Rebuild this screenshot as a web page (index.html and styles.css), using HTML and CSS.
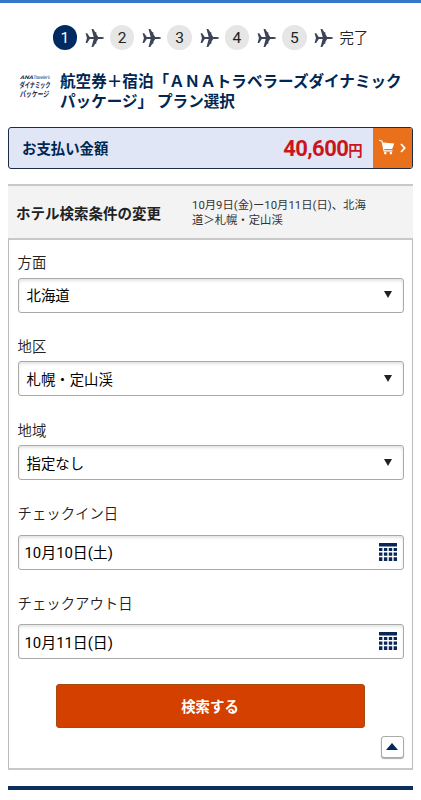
FILE: index.html
```html
<!DOCTYPE html>
<html lang="ja">
<head>
  <meta charset="UTF-8" />
  <meta name="viewport" content="width=device-width, initial-scale=1.0"/>
  <title>プラン選択</title>
  <link rel="stylesheet" href="styles.css">
</head>
<body>
  <svg width="0" height="0" class="defs">
    <symbol id="plane" viewBox="0 0 20 20">
      <path d="M0.6 5h1.6l2.7 3.9h4L6.7 0.8h1.8l5 8.1h3.4q2.5 0.2 2.7 1.1q-0.2 0.9-2.7 1.1h-3.4l-5 8.1H6.7l2.2-8.1h-4L2.2 15H0.6l1.4-5z"/>
      <path d="M9.2 4h2.4v1.8H9.2zM9.2 14.2h2.4V16H9.2z"/>
    </symbol>
    <symbol id="calendar" viewBox="0 0 18 18">
      <path d="M0 0h18v3.4H0zM0 5h3.4v3H0zM4.9 5h3.4v3H4.9zM9.8 5h3.4v3H9.8zM14.6 5H18v3h-3.4zM0 9.5h3.4v3.2H0zM4.9 9.5h3.4v3.2H4.9zM9.8 9.5h3.4v3.2H9.8zM14.6 9.5H18v3.2h-3.4zM0 14.3h3.4V18H0zM4.9 14.3h3.4V18H4.9zM9.8 14.3h3.4V18H9.8zM14.6 14.3H18V18h-3.4z"/>
    </symbol>
  </svg>

  <div class="steps">
    <span class="step current">1</span>
    <svg class="plane"><use href="#plane"/></svg>
    <span class="step">2</span>
    <svg class="plane"><use href="#plane"/></svg>
    <span class="step">3</span>
    <svg class="plane"><use href="#plane"/></svg>
    <span class="step">4</span>
    <svg class="plane"><use href="#plane"/></svg>
    <span class="step">5</span>
    <svg class="plane"><use href="#plane"/></svg>
    <span class="done">完了</span>
  </div>

  <div class="heading">
    <svg class="logo" viewBox="0 0 40 32">
      <g transform="skewX(-6)">
        <text class="logo-brand" x="5" y="8" textLength="13" lengthAdjust="spacingAndGlyphs">ANA</text>
        <text class="logo-brand light" x="18" y="8" textLength="16.5" lengthAdjust="spacingAndGlyphs">Traveler's</text>
        <text x="5" y="17" textLength="31" lengthAdjust="spacingAndGlyphs">ダイナミック</text>
        <text x="6.5" y="26" textLength="29" lengthAdjust="spacingAndGlyphs">パッケージ</text>
      </g>
    </svg>
    <h1>航空券＋宿泊「ＡＮＡトラベラーズダイナミック<br>パッケージ」 プラン選択</h1>
  </div>

  <div class="payment">
    <span class="payment-label">お支払い金額</span>
    <span class="price">40,600<small>円</small></span>
    <a class="cart">
      <svg width="16" height="16" viewBox="0 0 16 16" fill="#fff">
        <path d="M0 0.7L3.2 1.5L4 3.4L15.2 4.4L13.2 10H5.2L5.5 11.2H13.5V12.4H4.6L2.5 2.5L0 1.8z"/>
        <circle cx="6.3" cy="14.1" r="1.3"/>
        <circle cx="11.9" cy="14.1" r="1.3"/>
      </svg>
      <svg width="6" height="10" viewBox="0 0 6 10" fill="none" stroke="#fff" stroke-width="1.8">
        <path d="M1 1l3.7 4L1 9"/>
      </svg>
    </a>
  </div>

  <div class="search-head">
    <h2>ホテル検索条件の変更</h2>
    <p>10月9日(金)ー10月11日(日)、北海<br>道＞札幌・定山渓</p>
  </div>

  <div class="search-body">
    <div class="field">
      <label>方面</label>
      <div class="select">北海道<svg class="arrow" viewBox="0 0 8 7"><path d="M0 0h8L4 7z"/></svg></div>
    </div>
    <div class="field">
      <label>地区</label>
      <div class="select">札幌・定山渓<svg class="arrow" viewBox="0 0 8 7"><path d="M0 0h8L4 7z"/></svg></div>
    </div>
    <div class="field">
      <label>地域</label>
      <div class="select">指定なし<svg class="arrow" viewBox="0 0 8 7"><path d="M0 0h8L4 7z"/></svg></div>
    </div>
    <div class="field date">
      <label>チェックイン日</label>
      <div class="select">10月10日(土)<svg class="calendar"><use href="#calendar"/></svg></div>
    </div>
    <div class="field date">
      <label>チェックアウト日</label>
      <div class="select">10月11日(日)<svg class="calendar"><use href="#calendar"/></svg></div>
    </div>
    <button class="search-button">検索する</button>
    <button class="close-button">
      <svg width="12" height="7" viewBox="0 0 12 7"><path d="M6 0l6 7H0z" fill="#002a5c"/></svg>
    </button>
  </div>

  <div class="divider"></div>
</body>
</html>
```

FILE: styles.css
```css
* {
  box-sizing: border-box;
  margin: 0;
  padding: 0;
}

body {
  height: 800px;
  overflow: hidden;
  padding: 0 8px;
  border-top: 3px solid #3476c9;
  background: #fff;
  color: #222;
  font-family: Roboto, 'Noto Sans CJK JP', sans-serif;
  font-size: 14.4px;
}

.defs {
  display: block;
}

/* progress */
.steps {
  display: flex;
  align-items: center;
  height: 25px;
  margin-top: 22px;
  padding-left: 44.5px;
}

.step {
  width: 24.6px;
  height: 24.6px;
  border-radius: 50%;
  background: #e6e6e6;
  text-align: center;
  line-height: 26px;
  font-size: 15.5px;
}

.step.current {
  background: #002a61;
  color: #fff;
}

.plane {
  width: 19.5px;
  height: 20px;
  margin: 0 5.4px 0 7.9px;
  fill: #3e4458;
}

.done {
  padding-top: 1px;
  line-height: 25px;
  font-weight: 350;
}

/* title */
.heading {
  display: flex;
  margin-top: 21px;
  height: 56px;
  color: #002751;
}

.logo {
  width: 40px;
  height: 32px;
  margin: 0 4px 0 8px;
  overflow: visible;
  fill: #10294f;
  font-family: 'Noto Sans CJK JP', sans-serif;
  font-size: 8px;
  font-weight: 700;
}

.logo-brand {
  font-family: Roboto, sans-serif;
  font-size: 5px;
  font-style: italic;
}

.logo-brand.light {
  fill: #4a6f9c;
}

h1 {
  padding-top: 1px;
  font-size: 15.58px;
  line-height: 20px;
  white-space: nowrap;
}

/* payment bar */
.payment {
  display: flex;
  align-items: center;
  height: 42px;
  border: 1px solid #1c2c44;
  border-radius: 3px;
  background: #e0e6f6;
  overflow: hidden;
}

.payment-label {
  flex: 1;
  padding: 0 0 2px 13px;
  color: #002751;
  font-weight: 700;
}

.price {
  margin-right: 11px;
  color: #c9151b;
  font-size: 22px;
  font-weight: 700;
  letter-spacing: -0.6px;
}

.price small {
  font-size: 14.4px;
}

.cart {
  display: flex;
  align-items: center;
  gap: 5px;
  width: 39px;
  height: 100%;
  padding: 0 0 3px 6px;
  background: #e9711c;
}

.cart svg:last-child {
  margin-top: 2px;
}

/* search conditions */
.search-head {
  display: flex;
  align-items: center;
  height: 54px;
  margin-top: 15px;
  padding-left: 8px;
  border-top: 2px solid #c8c8c8;
  background: #f3f3f3;
}

.search-head h2 {
  width: 176px;
  font-size: 14.5px;
}

.search-head p {
  padding-top: 2px;
  font-size: 11.35px;
  line-height: 15.5px;
  color: #333;
}

.search-body {
  display: flex;
  flex-direction: column;
  height: 532px;
  padding: 11px 8.5px 0 8.5px;
  border: 1px solid #bbb;
  border-top: 2px solid #c8c8c8;
  border-bottom: 2px solid #c8c8c8;
}

.field {
  height: 83.8px;
}

.field.date {
  height: 89.6px;
}

.field label {
  display: block;
  height: 26.6px;
  line-height: 25px;
  font-weight: 350;
}

.date label {
  height: 32.5px;
}

.select {
  display: flex;
  align-items: center;
  justify-content: space-between;
  height: 35px;
  padding: 0 11px 1px 8px;
  border: 1px solid #aaa;
  border-radius: 3px;
  box-shadow: inset 0 2px 3px #e4e4e4;
  color: #000;
}

.date .select {
  padding: 0 6px 1px 6px;
  font-size: 14.9px;
}

.arrow {
  width: 8px;
  height: 7px;
  fill: #222;
}

.calendar {
  width: 18px;
  height: 18px;
  fill: #082757;
}

.search-button {
  align-self: center;
  flex-shrink: 0;
  width: 309px;
  height: 44px;
  margin: 2px 1px 0 0;
  border: 1px solid #a64b10;
  border-radius: 3px;
  background: #d44000;
  color: #fff;
  font-family: inherit;
  font-size: 14.4px;
  font-weight: 700;
}

.close-button {
  display: flex;
  align-items: center;
  justify-content: center;
  align-self: flex-end;
  width: 23px;
  height: 22px;
  margin-top: 8px;
  border: 1px solid #aaa;
  border-radius: 3px;
  box-shadow: 0 1px 1px #aaa;
  background: #fff;
}

.divider {
  height: 4px;
  margin-top: 16px;
  background: #0d2f5c;
}
```
